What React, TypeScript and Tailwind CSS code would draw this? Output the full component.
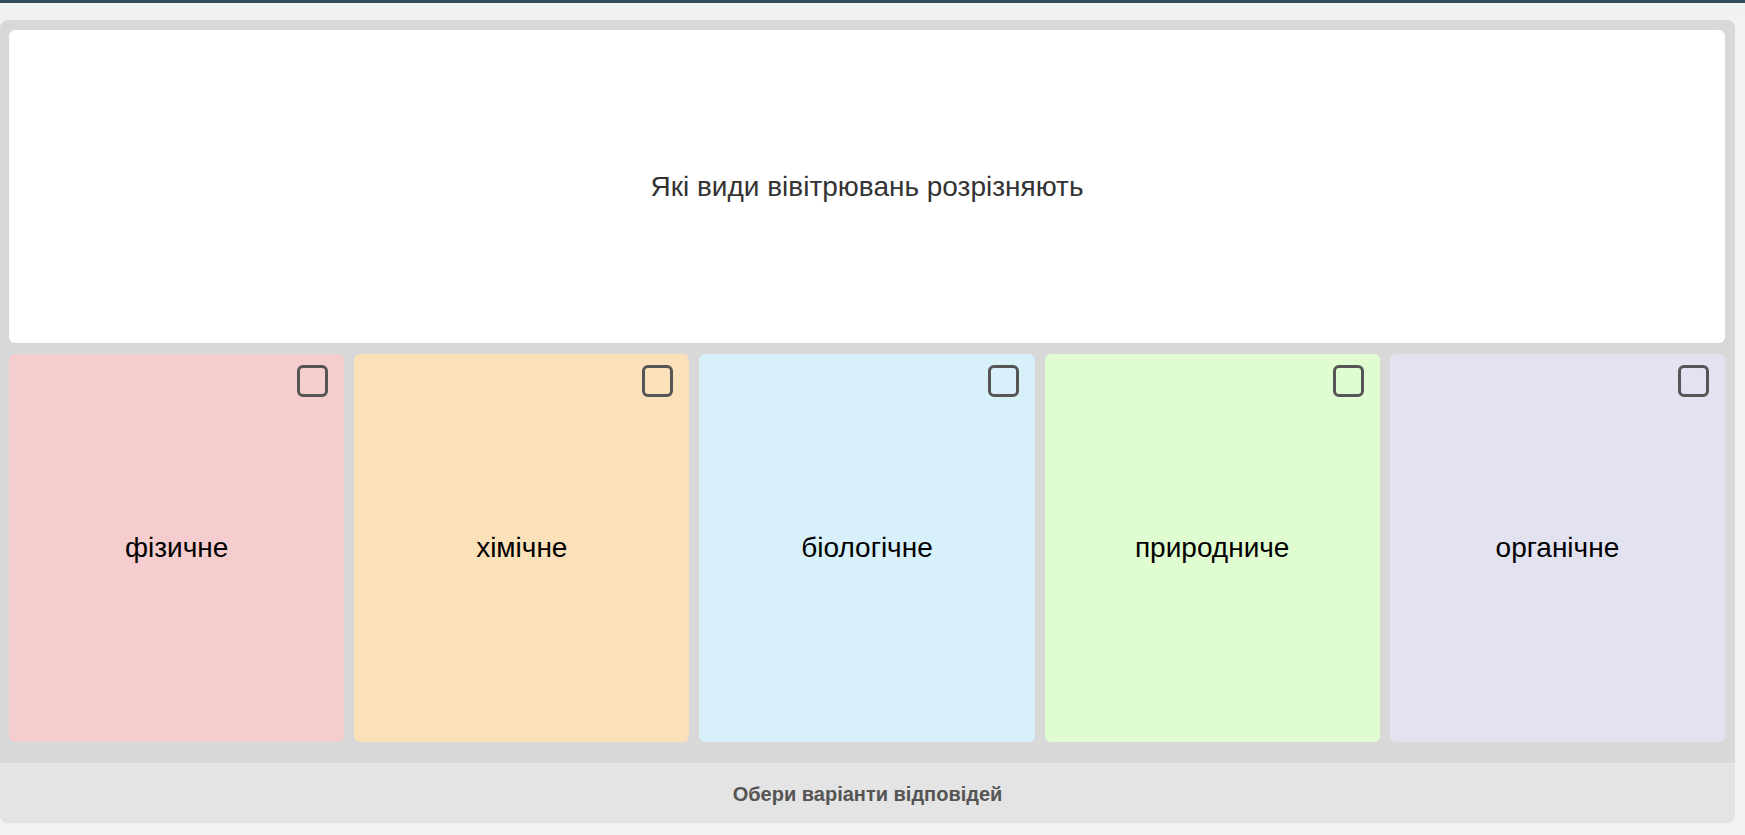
import React from "react";

const answers = [
  { text: "фізичне", bg: "bg-[#f6cdce]" },
  { text: "хімічне", bg: "bg-[#fbe1b9]" },
  { text: "біологічне", bg: "bg-[#d7f0f9]" },
  { text: "природниче", bg: "bg-[#e0fdd1]" },
  { text: "органічне", bg: "bg-[#e3e2f1]" },
];

export default function App() {
  return (
    <div className="min-h-[835px] w-full bg-[#f2f2f2] font-['Liberation_Sans',Arial,sans-serif]">
      <div className="h-[3px] w-full bg-[#2f4b5c]" />
      <div className="h-[17px] w-full bg-[#f0f1f1]" />
      <div className="w-[1735px] rounded-[8px] bg-[#d8d8d8]">
        <div className="flex flex-col gap-[11px] pl-[9px] pr-[10px] pt-[10px] pb-[21px]">
          <div className="flex h-[313px] items-center justify-center rounded-[6px] bg-white">
            <span className="text-[28px] text-[#333333]">Які види вівітрювань розрізняють</span>
          </div>
          <div className="grid h-[388px] grid-cols-5 gap-[10px]">
            {answers.map((a) => (
              <div
                key={a.text}
                className={`relative flex items-center justify-center rounded-[6px] ${a.bg}`}
              >
                <div className="absolute right-[16px] top-[11px] h-[32px] w-[31px] rounded-[6px] border-[3px] border-[#555555]" />
                <span className="text-[28px] text-black">{a.text}</span>
              </div>
            ))}
          </div>
        </div>
        <div className="flex h-[60px] items-center justify-center rounded-b-[8px] border-t border-[#e8e8e8] bg-[#e4e4e4]">
          <span className="text-[20px] font-bold text-[#555555]">Обери варіанти відповідей</span>
        </div>
      </div>
    </div>
  );
}
